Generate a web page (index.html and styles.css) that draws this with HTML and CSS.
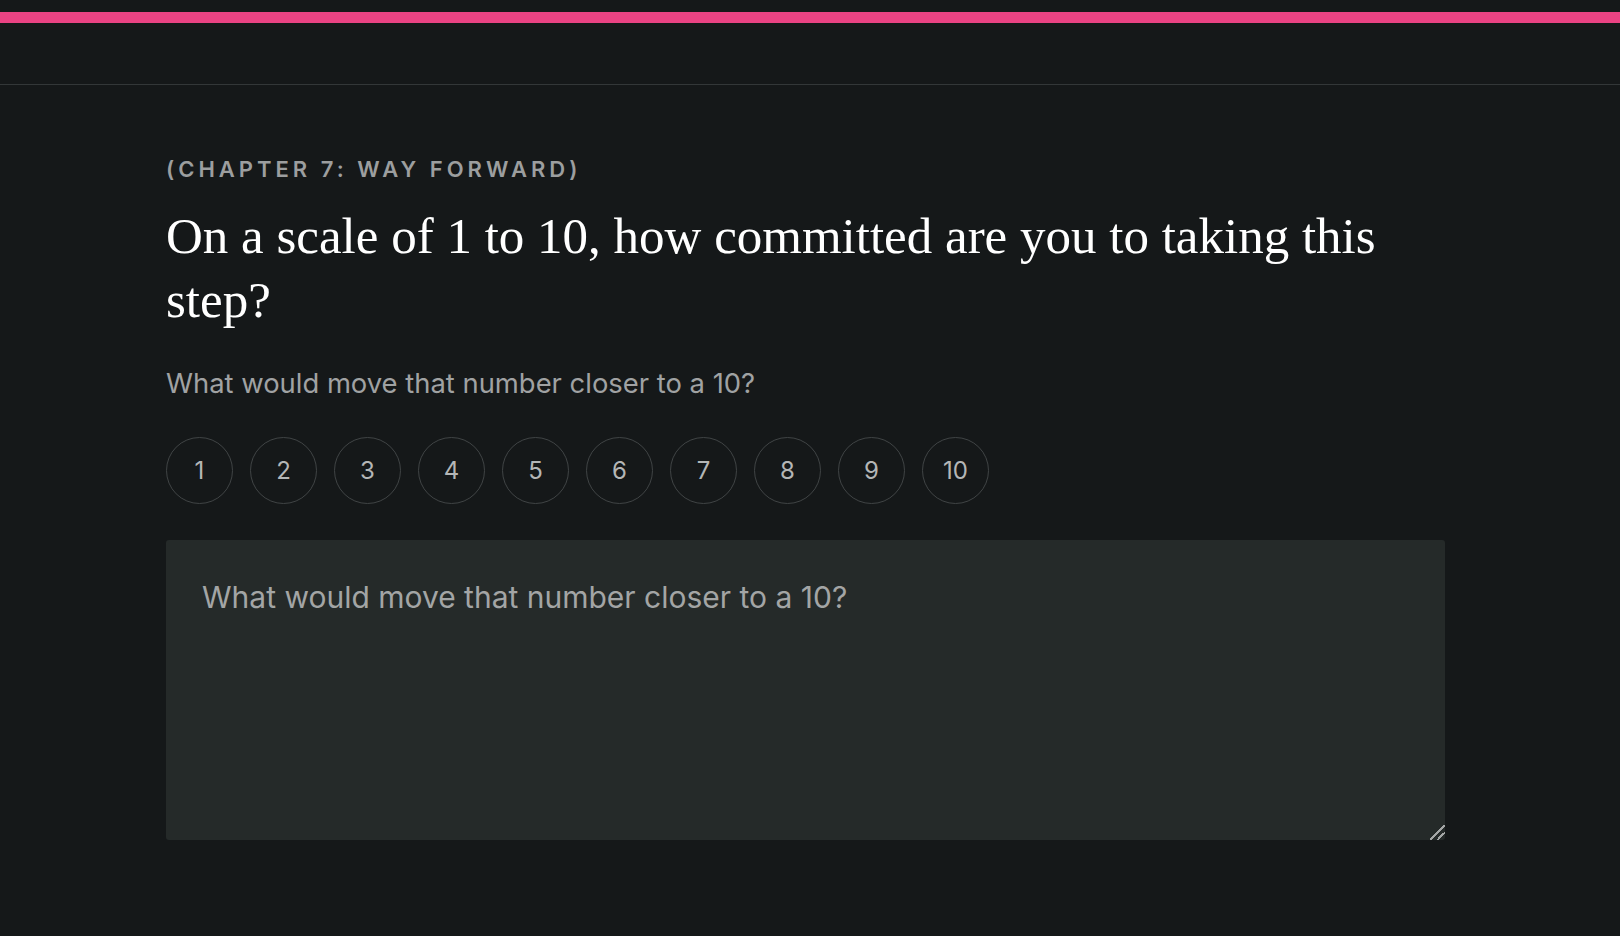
FILE: index.html
```
<!DOCTYPE html>
<html>
<head>
  <title>Chapter 7: Way Forward</title>
  <meta charset="utf-8">
  <link rel="stylesheet" href="styles.css">
</head>
<body>
<header class="topbar">
  <div class="progress"><div class="progress-fill"></div></div>
</header>
<main class="question">
  <p class="chapter">(Chapter 7: Way Forward)</p>
  <h1>On a scale of 1 to 10, how committed are you to taking this step?</h1>
  <p class="hint">What would move that number closer to a 10?</p>
  <div class="scale">
    <button>1</button>
    <button>2</button>
    <button>3</button>
    <button>4</button>
    <button>5</button>
    <button>6</button>
    <button>7</button>
    <button>8</button>
    <button>9</button>
    <button>10</button>
  </div>
  <textarea class="answer" placeholder="What would move that number closer to a 10?"></textarea>
</main>
</body>
</html>
```

FILE: styles.css
```
html, body {
  margin: 0;
  padding: 0;
  background: #151819;
  color: #fff;
  font-family: Inter, 'Noto Sans', Arial, sans-serif;
  color-scheme: dark;
}
/* 상단 진행 표시줄 */
.topbar {
  height: 85px;
  padding-top: 12px;
  box-sizing: border-box;
  border-bottom: 1px solid #333738;
}
.progress {
  height: 11px;
  background: #2a2e2f;
}
.progress-fill {
  height: 100%;
  width: 100%;
  background: #ea4383;
}
.question {
  max-width: 1280px;
  margin-left: 166px;
  padding-top: 70px;
}
.chapter {
  margin: 0;
  font-size: 22px;
  line-height: 28px;
  font-weight: 600;
  letter-spacing: 4px;
  text-transform: uppercase;
  color: #9c9e9f;
}
h1 {
  margin: 21px 0 0 0;
  font-family: 'Liberation Serif', 'Times New Roman', serif;
  font-weight: normal;
  font-size: 51px;
  line-height: 64px;
  color: #fff;
}
.hint {
  margin: 33px 0 0 0;
  font-size: 27.4px;
  line-height: 36px;
  color: #a0a2a3;
}
/* 1~10 점수 버튼 */
.scale {
  display: flex;
  gap: 17px;
  margin-top: 36px;
}
.scale button {
  width: 67px;
  height: 67px;
  border-radius: 50%;
  border: 1.5px solid #404445;
  background: transparent;
  color: #b4b6b6;
  font-family: inherit;
  font-size: 24px;
  padding: 0;
  cursor: pointer;
}
.answer {
  display: block;
  box-sizing: border-box;
  width: 1279px;
  height: 300px;
  margin-top: 36px;
  padding: 36px 36px;
  background: #252a29;
  border: none;
  border-radius: 3px;
  color: #ddd;
  font-family: inherit;
  font-size: 30px;
  line-height: 1.4;
  outline: none;
}
.answer::placeholder {
  color: #a3a5a5;
}
.answer::-webkit-resizer {
  background: linear-gradient(135deg, transparent 0 46%, #a4a6a6 46% 54%, transparent 54% 70%, #a4a6a6 70% 78%, transparent 78%);
}
```
